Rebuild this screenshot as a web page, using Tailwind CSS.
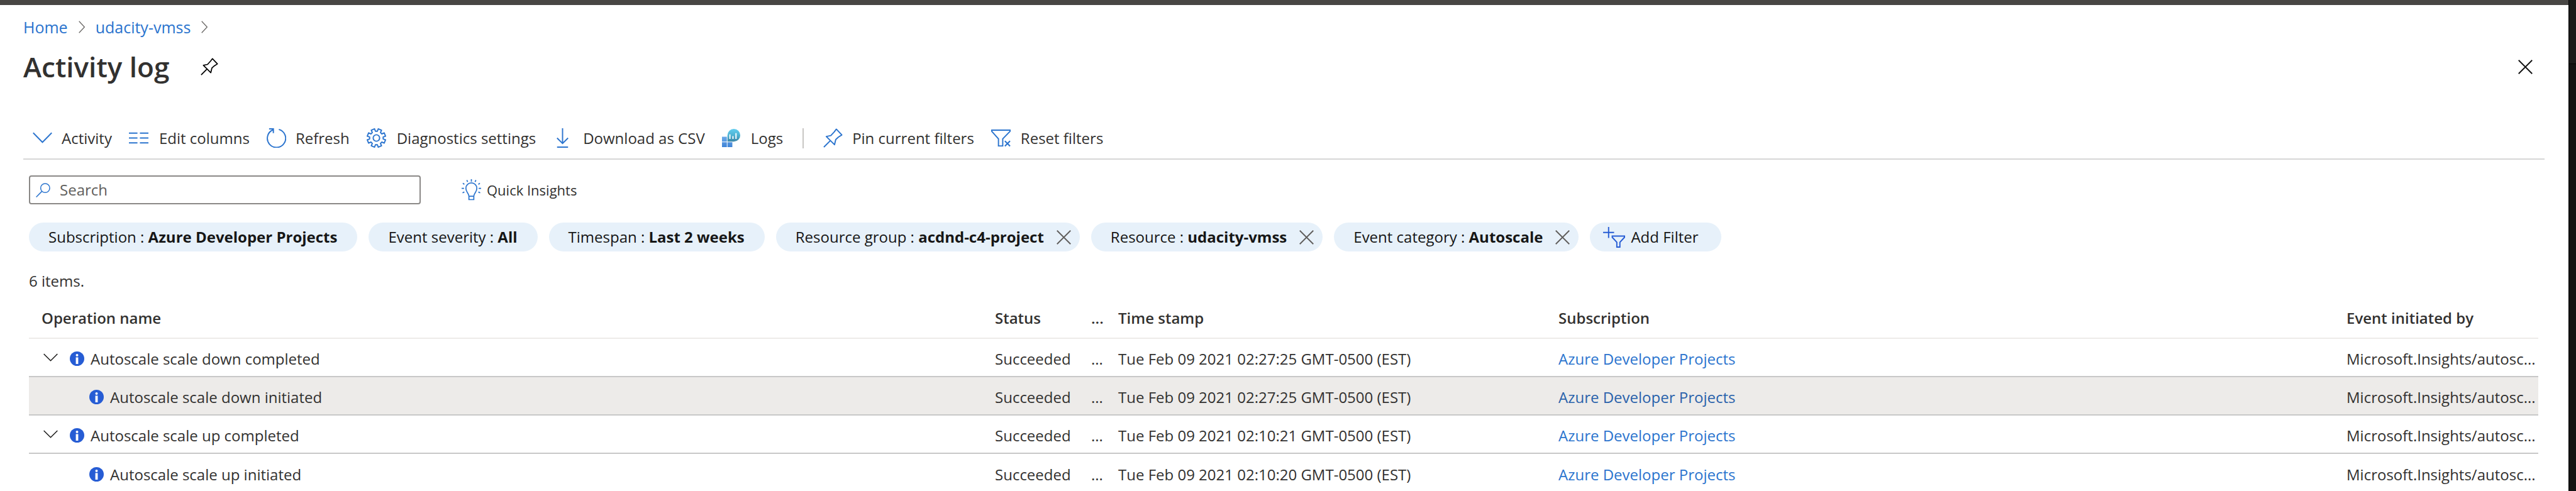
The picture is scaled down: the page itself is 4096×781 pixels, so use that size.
<!DOCTYPE html>
<html lang="en">
<head>
<meta charset="utf-8">
<title>Activity log</title>
<script src="https://cdn.jsdelivr.net/npm/@tailwindcss/browser@4"></script>
</head>
<body class="bg-white text-[#323130] font-['Open_Sans',sans-serif] text-[24px] leading-[32px]">
<svg class="hidden">
  <defs>
    <symbol id="crumb" viewBox="0 0 10 20"><path d="M0.7 0.7 9.3 10 0.7 19.3" fill="none" stroke="#6b6967" stroke-width="1.3"/></symbol>
    <symbol id="pin" viewBox="0 0 32 32"><path d="M21.5 1.5 30.5 11 25 14.5 20.5 18.5 18.5 27 5 13.5 12.5 12 18 6ZM11.5 20.5 1 31" fill="none" stroke="currentColor" stroke-width="2" stroke-linejoin="round"/></symbol>
    <symbol id="x" viewBox="0 0 24 24"><path d="M0.8 0.8 23.2 23.2M23.2 0.8 0.8 23.2" fill="none" stroke="currentColor" stroke-width="2"/></symbol>
    <symbol id="info" viewBox="0 0 24 24"><circle cx="12" cy="12" r="12" fill="#265cd4"/><circle cx="12" cy="6.2" r="2.1" fill="#fff"/><rect x="10" y="9.8" width="4" height="11" fill="#fff"/></symbol>
    <symbol id="chev" viewBox="0 0 24 13"><path d="M0.7 0.7 12 12 23.3 0.7" fill="none" stroke="#1b1a19" stroke-width="1.6"/></symbol>
  </defs>
</svg>
<div class="flex min-h-screen">
  <div class="flex-1 min-w-0">
    <div class="h-2 bg-[#484644]"></div>
    <div class="pl-[37px] pr-[38px]">
      <nav class="flex items-center pt-[19px] text-[25px] text-[#2b74ce]" aria-label="Breadcrumb">
        <a href="#">Home</a>
        <svg class="w-[10px] h-[20px] mx-[17px]"><use href="#crumb"/></svg>
        <a href="#">udacity-vmss</a>
        <svg class="w-[10px] h-[20px] mx-[17px]"><use href="#crumb"/></svg>
      </nav>
      <header class="flex items-center pt-[17px] pr-[19px]">
        <h1 class="text-[44px] leading-[60px] font-semibold">Activity log</h1>
        <button class="ml-[50px] text-black" aria-label="Pin"><svg class="size-[28px]"><use href="#pin"/></svg></button>
        <button class="ml-auto text-[#111]" aria-label="Close"><svg class="size-[23px]"><use href="#x"/></svg></button>
      </header>
      <div class="flex items-center gap-[27px] mt-[54px] pl-[15px] pb-[3px] border-b-2 border-[#d6d6d6] h-[64px] whitespace-nowrap" role="toolbar">
        <button class="flex items-center gap-[15px]"><svg class="size-[31px]" viewBox="0 0 32 32" fill="none" stroke="#2b74ce" stroke-width="2"><path d="M0.8 7.5 16 23 31.2 7.5"/></svg>Activity</button>
        <button class="flex items-center gap-[17px]"><svg class="size-[31px]" viewBox="0 0 32 32" fill="none" stroke="#2b74ce" stroke-width="2"><path d="M0 8H14M18 8H32M0 16H14M18 16H32M0 24H14M18 24H32"/></svg>Edit columns</button>
        <button class="flex items-center gap-[15px]"><svg class="size-[31px]" viewBox="0 0 32 32" fill="none" stroke="#2b74ce" stroke-width="2"><path d="M20 2A15 15 0 1 1 10.5 2.6M4 1H11V8"/></svg>Refresh</button>
        <button class="flex items-center gap-[17px]"><svg class="size-[31px]" viewBox="0 0 32 32" fill="none" stroke="#2b74ce" stroke-width="2" stroke-linejoin="round"><circle cx="16" cy="16" r="5.3"/><path d="M17.6 4.9 19 1 24.4 3.2 22.7 7.1 24.9 9.3 28.8 7.6 31 13 27.1 14.4V17.6L31 19 28.8 24.4 24.9 22.7 22.7 24.9 24.4 28.8 19 31 17.6 27.1H14.4L13 31 7.6 28.8 9.3 24.9 7.1 22.7 3.2 24.4 1 19 4.9 17.6V14.4L1 13 3.2 7.6 7.1 9.3 9.3 7.1 7.6 3.2 13 1 14.4 4.9Z"/></svg>Diagnostics settings</button>
        <button class="flex items-center gap-[17px]"><svg class="size-[31px]" viewBox="0 0 32 32" fill="none" stroke="#2b74ce" stroke-width="2"><path d="M16 0V25M7 16 16 25 25 16M7 31H25"/></svg>Download as CSV</button>
        <button class="flex items-center gap-[15px]"><svg class="size-[31px]" viewBox="0 0 32 32">
          <defs>
            <linearGradient id="balloon" x1="0" y1="0" x2="0" y2="1"><stop offset="0" stop-color="#62cdef"/><stop offset="0.5" stop-color="#4fb3d3"/><stop offset="1" stop-color="#3a85a6"/></linearGradient>
            <linearGradient id="tiles" x1="0" y1="0" x2="0" y2="1"><stop offset="0" stop-color="#6aa9e8"/><stop offset="1" stop-color="#3f83d6"/></linearGradient>
          </defs>
          <path d="M0 14H8V22H0ZM0 23H8V31H0ZM9 23H17V31H9Z" fill="url(#tiles)"/><path d="M9 22V11.5A10.5 10.5 0 1 1 19.5 22Z" fill="url(#balloon)"/><path d="M12 10H14V17.5H12ZM17 13H19V17.5H17ZM22 8H24V17.5H22Z" fill="#fff"/></svg>Logs</button>
        <div class="w-[2px] h-[32px] ml-1 mr-1 bg-[#c8c6c4]"></div>
        <button class="flex items-center gap-[15px] text-[#2b74ce]"><svg class="size-[31px]"><use href="#pin"/></svg><span class="text-[#323130]">Pin current filters</span></button>
        <button class="flex items-center gap-[16px]"><svg class="size-[31px]" viewBox="0 0 32 32" fill="none" stroke="#2b74ce" stroke-width="2"><path d="M1 3H31V5L19 17.5V29H12V17.5L1 5Z"/><path d="M22.5 21 31 29.5M31 21 22.5 29.5" stroke-width="2.2"/></svg>Reset filters</button>
      </div>
    </div>
    <main class="pl-[46px] pr-[48px]">
      <div class="flex items-center mt-[25px]">
        <label class="flex items-center w-[623px] h-[46px] border-2 border-[#8a8886] rounded-[4px] pl-[9px] gap-[15px]">
          <svg class="size-[23px]" viewBox="0 0 24 24" fill="none" stroke="#2b74ce" stroke-width="1.6"><circle cx="15.5" cy="8.5" r="7.5"/><path d="M10 14 0.6 23.4"/></svg>
          <input type="text" placeholder="Search" aria-label="Search" class="flex-1 min-w-0 outline-none placeholder:text-[#605e5c]">
        </label>
        <button class="flex items-center gap-[9px] ml-[65px] text-[22px]"><svg class="w-[31px] h-[34px]" viewBox="0 0 32 35" fill="none" stroke="#2b74ce" stroke-width="1.8"><path d="M12 28C12 23 7 21.5 7 15A9 9 0 0 1 25 15C25 21.5 20 23 20 28ZM12 28V33.5H20V28M16 0V4M8.5 1.5 10 4.5M23.5 1.5 22 4.5M2 6.5 4.5 8.5M30 6.5 27.5 8.5M0 15H4M28 15H32M1.5 22.5 4.5 21M30.5 22.5 27.5 21"/></svg>Quick Insights</button>
      </div>
      <div class="flex items-center gap-[18px] mt-[29px] text-[#161616] whitespace-nowrap">
        <button class="h-[46px] rounded-full bg-[#e7f1fa] pl-[31px] pr-[32px]">Subscription : <b>Azure Developer Projects</b></button>
        <button class="h-[46px] rounded-full bg-[#e7f1fa] pl-[31px] pr-[32px]">Event severity : <b>All</b></button>
        <button class="h-[46px] rounded-full bg-[#e7f1fa] pl-[31px] pr-[32px]">Timespan : <b>Last 2 weeks</b></button>
        <div class="flex items-center h-[46px] rounded-full bg-[#e7f1fa] pl-[31px] pr-[14px] gap-[20px]"><button>Resource group : <b>acdnd-c4-project</b></button><button class="text-[#605e5c]" aria-label="Remove resource group filter"><svg class="size-[23px]"><use href="#x"/></svg></button></div>
        <div class="flex items-center h-[46px] rounded-full bg-[#e7f1fa] pl-[31px] pr-[14px] gap-[20px]"><button>Resource : <b>udacity-vmss</b></button><button class="text-[#605e5c]" aria-label="Remove resource filter"><svg class="size-[23px]"><use href="#x"/></svg></button></div>
        <div class="flex items-center h-[46px] rounded-full bg-[#e7f1fa] pl-[31px] pr-[14px] gap-[20px]"><button>Event category : <b>Autoscale</b></button><button class="text-[#605e5c]" aria-label="Remove event category filter"><svg class="size-[23px]"><use href="#x"/></svg></button></div>
        <button class="flex items-center h-[46px] rounded-full bg-[#e7f1fa] pl-[21px] pr-[36px] gap-[9px]"><svg class="w-[35px] h-[33px]" viewBox="0 0 36 34" fill="none" stroke="#265cd4" stroke-width="2"><path d="M9 0V18M0 9H18M15 15H35V17L27.5 25V33H22.5V25L15 17Z"/></svg>Add Filter</button>
      </div>
      <p class="mt-[31px]">6 items.</p>
      <table class="w-full table-fixed border-collapse mt-[15px] whitespace-nowrap">
        <colgroup><col class="w-[1516px]"><col class="w-[153px]"><col class="w-[43px]"><col class="w-[700px]"><col class="w-[1253px]"><col></colgroup>
        <thead>
          <tr class="h-[60px] border-b-2 border-[#edebe9] text-left align-middle">
            <th class="pl-[20px] pb-[3px] font-semibold">Operation name</th><th class="pl-[20px] pb-[3px] font-semibold">Status</th><th class="pl-[20px] pb-[3px] font-semibold">...</th><th class="pl-[20px] pb-[3px] font-semibold">Time stamp</th><th class="pl-[20px] pb-[3px] font-semibold">Subscription</th><th class="pl-[20px] pb-[3px] font-semibold">Event initiated by</th>
          </tr>
        </thead>
        <tbody>
          <tr class="h-[61px] border-b-2 border-[#c8c8c8]">
            <td class="pl-[23px] pt-1"><div class="flex items-center"><button aria-label="Collapse" class="mr-[19px] pb-1"><svg class="w-[23px] h-[13px]"><use href="#chev"/></svg></button><svg class="size-[23px] mr-[10px]"><use href="#info"/></svg>Autoscale scale down completed</div></td>
            <td class="pl-[20px] pt-1">Succeeded</td><td class="pl-[20px] pt-1">...</td><td class="pl-[20px] pt-1">Tue Feb 09 2021 02:27:25 GMT-0500 (EST)</td><td class="pl-[20px] pt-1"><a href="#" class="text-[#2b74ce]">Azure Developer Projects</a></td><td class="pl-[20px] pt-1">Microsoft.Insights/autosc...</td>
          </tr>
          <tr class="h-[61px] border-b-2 border-[#c8c8c8] bg-[#edebe9]">
            <td class="pl-[96px] pt-1"><div class="flex items-center"><svg class="size-[23px] mr-[10px]"><use href="#info"/></svg>Autoscale scale down initiated</div></td>
            <td class="pl-[20px] pt-1">Succeeded</td><td class="pl-[20px] pt-1">...</td><td class="pl-[20px] pt-1">Tue Feb 09 2021 02:27:25 GMT-0500 (EST)</td><td class="pl-[20px] pt-1"><a href="#" class="text-[#2a62ab]">Azure Developer Projects</a></td><td class="pl-[20px] pt-1">Microsoft.Insights/autosc...</td>
          </tr>
          <tr class="h-[61px] border-b-2 border-[#c8c8c8]">
            <td class="pl-[23px] pt-1"><div class="flex items-center"><button aria-label="Collapse" class="mr-[19px] pb-1"><svg class="w-[23px] h-[13px]"><use href="#chev"/></svg></button><svg class="size-[23px] mr-[10px]"><use href="#info"/></svg>Autoscale scale up completed</div></td>
            <td class="pl-[20px] pt-1">Succeeded</td><td class="pl-[20px] pt-1">...</td><td class="pl-[20px] pt-1">Tue Feb 09 2021 02:10:21 GMT-0500 (EST)</td><td class="pl-[20px] pt-1"><a href="#" class="text-[#2b74ce]">Azure Developer Projects</a></td><td class="pl-[20px] pt-1">Microsoft.Insights/autosc...</td>
          </tr>
          <tr class="h-[58px]">
            <td class="pl-[96px] pt-2"><div class="flex items-center"><svg class="size-[23px] mr-[10px]"><use href="#info"/></svg>Autoscale scale up initiated</div></td>
            <td class="pl-[20px] pt-2">Succeeded</td><td class="pl-[20px] pt-2">...</td><td class="pl-[20px] pt-2">Tue Feb 09 2021 02:10:20 GMT-0500 (EST)</td><td class="pl-[20px] pt-2"><a href="#" class="text-[#2b74ce]">Azure Developer Projects</a></td><td class="pl-[20px] pt-2">Microsoft.Insights/autosc...</td>
          </tr>
        </tbody>
      </table>
    </main>
  </div>
  <div class="w-3 bg-[#121212] border-l border-black"><div class="h-[102px] border-b border-black bg-[#1a1a1a]"></div></div>
</div>
</body>
</html>
